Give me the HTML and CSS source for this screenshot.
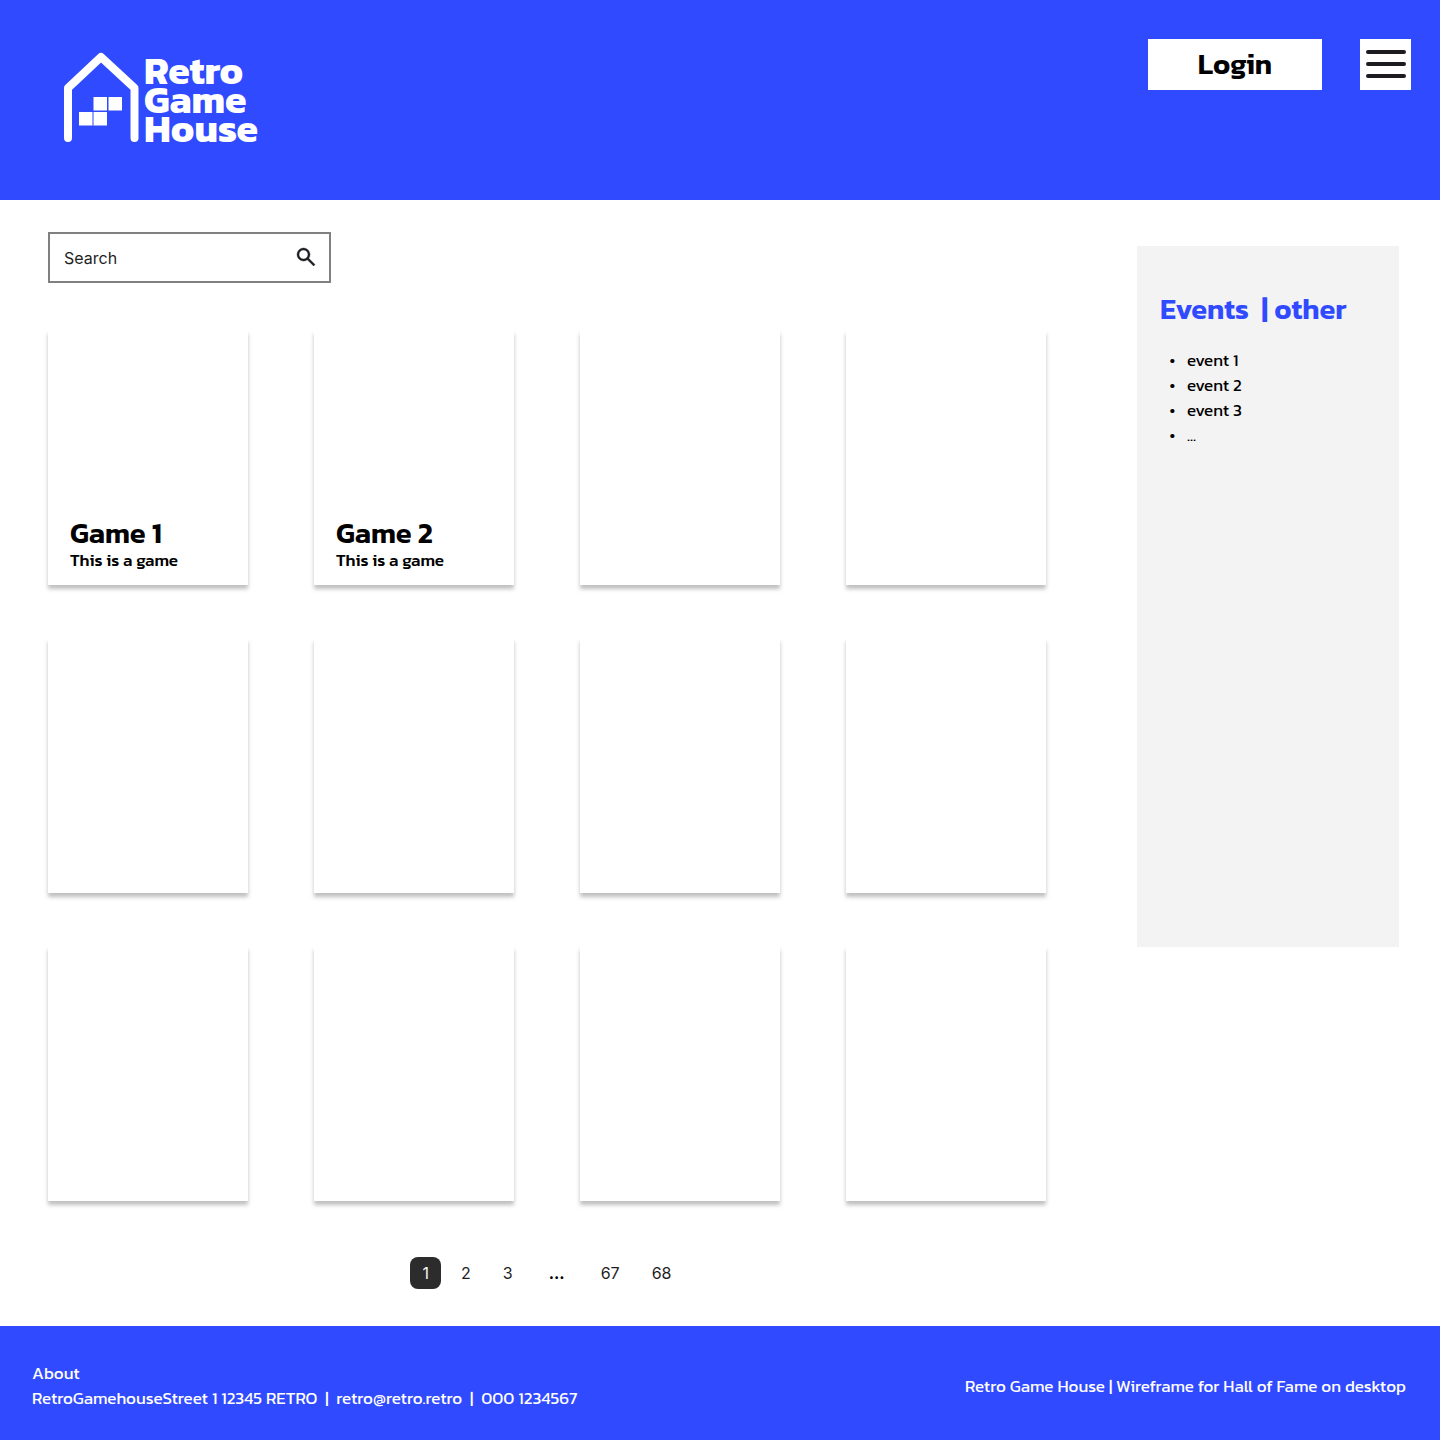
FILE: index.html
```html
<!DOCTYPE html>
<html lang="en">
<head>
<meta charset="utf-8">
<meta name="viewport" content="width=device-width, initial-scale=1">
<title>Retro Game House</title>
<link rel="stylesheet" href="styles.css">
</head>
<body>
<header class="site-header">
  <a class="logo" href="#">
    <svg class="logo-mark" width="76" height="92" viewBox="0 0 76 92" aria-hidden="true">
      <path d="M4 86V36L37 5L70.500 36V86" fill="none" stroke="#fff" stroke-width="8" stroke-linecap="round" stroke-linejoin="round"/>
      <path d="M29.500 45H43v13.500H29.500zM44.500 45H58v13.500H44.500zM15 60H28.500v13.500H15zM29.500 60H43v13.500H29.500z" fill="#fff"/>
    </svg>
    <span class="logo-text"><span>Retro</span><span>Game</span><span>House</span></span>
  </a>
  <div class="header-actions">
    <button class="login" type="button">Login</button>
    <button class="menu" type="button" aria-label="Menu">
      <svg width="40" height="29" viewBox="0 0 40 29" aria-hidden="true"><path d="M2 2H38M2 14H38M2 26H38" stroke="#1d1b20" stroke-width="4" stroke-linecap="round"/></svg>
    </button>
  </div>
</header>
<main class="page">
  <section class="catalog">
    <form class="search" role="search">
      <input class="search-input" type="search" placeholder="Search" aria-label="Search">
      <button class="search-button" type="submit" aria-label="Submit search">
        <svg width="24" height="26" viewBox="0 0 24 26" aria-hidden="true"><path fill="#1d1b20" stroke="#1d1b20" stroke-width=".4" d="M19.600 21l-6.300-6.300A6.100 6.100 0 0 1 9.500 16 6.500 6.500 0 1 1 16 9.500a6.100 6.100 0 0 1-1.300 3.800l6.300 6.300zM9.500 14A4.500 4.500 0 1 0 5 9.500 4.500 4.500 0 0 0 9.500 14z"/></svg>
      </button>
    </form>
    <div class="games">
      <article class="card"><h2 class="card-title">Game 1</h2><p class="card-text">This is a game</p></article>
      <article class="card"><h2 class="card-title">Game 2</h2><p class="card-text">This is a game</p></article>
      <article class="card"></article>
      <article class="card"></article>
      <article class="card"></article>
      <article class="card"></article>
      <article class="card"></article>
      <article class="card"></article>
      <article class="card"></article>
      <article class="card"></article>
      <article class="card"></article>
      <article class="card"></article>
    </div>
    <nav class="pagination" aria-label="Pages">
      <a class="page-link current" href="#" aria-current="page">1</a>
      <a class="page-link" href="#">2</a>
      <a class="page-link" href="#">3</a>
      <span class="page-gap">...</span>
      <a class="page-link" href="#">67</a>
      <a class="page-link" href="#">68</a>
    </nav>
  </section>
  <aside class="events">
    <h2 class="events-title">Events&nbsp; | other</h2>
    <ul class="events-list">
      <li>event 1</li>
      <li>event 2</li>
      <li>event 3</li>
      <li>...</li>
    </ul>
  </aside>
</main>
<footer class="site-footer">
  <div>
    <p>About</p>
    <p>RetroGamehouseStreet 1 12345 RETRO&nbsp; |&nbsp; retro@retro.retro&nbsp; |&nbsp; 000 1234567</p>
  </div>
  <p>Retro Game House | Wireframe for Hall of Fame on desktop</p>
</footer>
</body>
</html>
```
FILE: styles.css
```css
* { box-sizing: border-box; }

body {
  margin: 0;
  min-height: 100vh;
  display: flex;
  flex-direction: column;
  background: #fff;
  color: #000;
  font: 17px/25px Kanit, "Noto Sans", sans-serif;
}

h2, p, ul { margin: 0; }
a { color: inherit; text-decoration: none; }
svg { display: block; }

button {
  border: 0;
  padding: 0;
  background: #fff;
  font: inherit;
  color: inherit;
  cursor: pointer;
}

.site-header {
  min-height: 200px;
  padding: 39px 29px 39px 64px;
  display: flex;
  justify-content: space-between;
  align-items: flex-start;
  background: #304aff;
}

.logo {
  display: flex;
  gap: 4px;
  padding-top: 13px;
  color: #fff;
}

.logo-text {
  display: flex;
  flex-direction: column;
  padding-top: 4px;
  font-size: 39px;
  font-weight: 700;
  line-height: 29px;
}

.header-actions { display: flex; gap: 38px; }

.login {
  width: 174px;
  height: 51px;
  padding-bottom: 2px;
  font-size: 29px;
  font-weight: 600;
}

.menu {
  width: 51px;
  height: 51px;
  display: grid;
  place-items: center;
}

.page {
  flex: 1;
  display: flex;
  align-items: flex-start;
  gap: 91px;
  padding: 32px 41px 37px 48px;
}

.catalog { flex: 1; }

.search {
  width: 283px;
  max-width: 100%;
  height: 51px;
  display: flex;
  align-items: center;
  padding: 0 11px 0 14px;
  border: 2px solid #808080;
}

.search-input {
  flex: 1;
  min-width: 0;
  border: 0;
  padding: 0;
  outline: 0;
  background: none;
  font: 16px/24px Inter, sans-serif;
}

.search-input::placeholder { color: #1e1e1e; opacity: 1; }

.games {
  display: grid;
  grid-template-columns: repeat(4, 1fr);
  gap: 53px 66px;
  margin-top: 47px;
}

.card {
  min-height: 255px;
  display: flex;
  flex-direction: column;
  justify-content: flex-end;
  padding: 12px 22px;
  background: #fff;
  box-shadow: 0 4px 4px rgba(0, 0, 0, 0.25);
}

.card-title { font-size: 29px; font-weight: 600; line-height: 31px; }
.card-text { font-weight: 500; }

.pagination {
  display: flex;
  justify-content: center;
  gap: 8px;
  margin-top: 56px;
  font: 16px/16px Inter, sans-serif;
  color: #1e1e1e;
}

.page-link { padding: 8px 12px; border-radius: 8px; }
.current { background: #2c2c2c; color: #f5f5f5; }
.page-gap { padding: 8px 16px; font-weight: 700; color: #000; }

.events {
  width: 262px;
  min-height: 701px;
  margin-top: 14px;
  padding: 45px 23px;
  background: #f3f3f3;
}

.events-title {
  font-size: 29px;
  font-weight: 600;
  line-height: 36px;
  color: #304aff;
  white-space: nowrap;
}

.events-list {
  margin-top: 21px;
  padding-left: 27px;
  list-style-type: "•\00a0\00a0\00a0";
}

.site-footer {
  display: flex;
  justify-content: space-between;
  align-items: center;
  gap: 32px;
  padding: 35px 34px 29px 32px;
  background: #304aff;
  color: #fff;
}
```
